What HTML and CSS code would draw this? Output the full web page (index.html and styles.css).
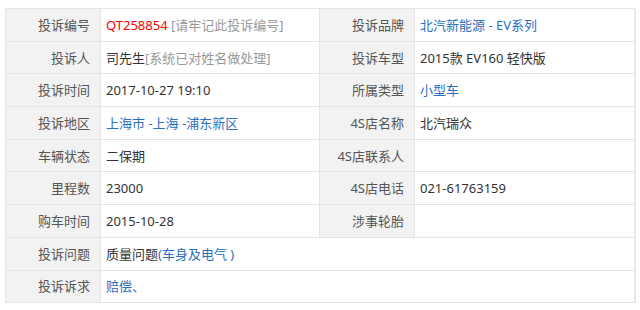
FILE: index.html
```html
<!DOCTYPE html>
<html lang="zh-CN">
<head>
<meta charset="utf-8">
<link rel="stylesheet" href="styles.css">
</head>
<body>
<table class="info">
  <colgroup>
    <col class="c-label"><col class="c-value"><col class="c-label"><col class="c-value2">
  </colgroup>
  <tr>
    <th>投诉编号</th>
    <td><span class="red">QT258854</span> <span class="hint">[请牢记此投诉编号]</span></td>
    <th>投诉品牌</th>
    <td><span class="link">北汽新能源 - EV系列</span></td>
  </tr>
  <tr>
    <th>投诉人</th>
    <td>司先生<span class="hint">[系统已对姓名做处理]</span></td>
    <th>投诉车型</th>
    <td>2015款 EV160 轻快版</td>
  </tr>
  <tr>
    <th>投诉时间</th>
    <td>2017-10-27 19:10</td>
    <th>所属类型</th>
    <td><span class="link">小型车</span></td>
  </tr>
  <tr>
    <th>投诉地区</th>
    <td><span class="link">上海市 -上海 -浦东新区</span></td>
    <th>4S店名称</th>
    <td>北汽瑞众</td>
  </tr>
  <tr>
    <th>车辆状态</th>
    <td>二保期</td>
    <th>4S店联系人</th>
    <td></td>
  </tr>
  <tr>
    <th>里程数</th>
    <td>23000</td>
    <th>4S店电话</th>
    <td>021-61763159</td>
  </tr>
  <tr>
    <th>购车时间</th>
    <td>2015-10-28</td>
    <th>涉事轮胎</th>
    <td></td>
  </tr>
  <tr>
    <th>投诉问题</th>
    <td colspan="3">质量问题<span class="link">(车身及电气 )</span></td>
  </tr>
  <tr>
    <th>投诉诉求</th>
    <td colspan="3"><span class="link">赔偿、</span></td>
  </tr>
</table>
</body>
</html>
```

FILE: styles.css
```css
html, body {
  margin: 0;
  padding: 0;
  background: #ffffff;
}
body {
  font-family: "Noto Sans", "Noto Sans CJK SC", sans-serif;
  font-size: 13px;
  color: #333333;
}
.info {
  margin: 8px 0 0 5px;
  width: 628px;
  table-layout: fixed;
  border-collapse: collapse;
  border: 1px solid #e4e4e4;
  box-shadow: 1px 1px 0 #ececec;
}
.c-label { width: 95px; }
.c-value { width: 219px; }
.c-value2 { width: 220px; }
.info th, .info td {
  border: 1px solid #e4e4e4;
  height: 31.7px;
  padding: 0;
  line-height: 18px;
  white-space: nowrap;
  overflow: hidden;
}
.info th {
  background: #f2f2f2;
  font-weight: normal;
  text-align: right;
  color: #555555;
  padding-right: 10px;
}
.info td {
  text-align: left;
  padding-left: 5px;
  color: #333333;
}
.red { color: #ff0000; }
.hint { color: #999999; }
.link { color: #2a6fc0; }
```
